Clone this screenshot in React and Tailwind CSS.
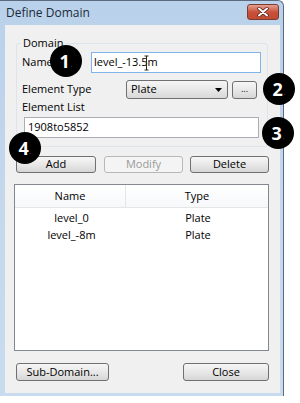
import React from "react";

function Badge({ n, className }) {
  return (
    <div
      className={
        "absolute w-[32px] h-[32px] rounded-full bg-black flex items-center justify-center " +
        className
      }
    >
      <span className="text-white font-bold text-[18px] leading-none font-['Open_Sans',sans-serif]">
        {n}
      </span>
      <span className="text-[#9a9a9a] text-[6px] leading-none mt-[8px] ml-[1px]">.</span>
    </div>
  );
}

function Btn({ children, className = "", disabled = false }) {
  return (
    <div
      className={
        "flex items-center justify-center rounded-[3px] border " +
        (disabled
          ? "border-[#b5b9bc] bg-[#f4f4f4] text-[#9a9a9a] "
          : "border-[#707070] bg-gradient-to-b from-[#f6f6f6] via-[#e8e8e8] to-[#d6d6d6] text-black ") +
        className
      }
    >
      {children}
    </div>
  );
}

export default function App() {
  return (
    <div className="relative w-[300px] h-[403px] bg-white overflow-hidden font-['Open_Sans',sans-serif] text-[11px] text-black">
      <div className="flex flex-col w-[284px] h-[396px] bg-gradient-to-b from-[#b9d1ea] via-[#c4d7ed] to-[#c9dbef] border-t border-r border-[#5b6b7d] rounded-tr-[6px]">
        {/* title bar */}
        <div className="flex items-center h-[24px] pl-[6px] pr-[4px]">
          <span className="text-[12px] text-[#1c2a3a] leading-none">Define Domain</span>
          <div className="ml-auto mt-[-3px] w-[32px] h-[16px] rounded-[3px] border border-[#7a3b30] bg-gradient-to-b from-[#e4a08f] via-[#c9513b] to-[#c24a33] flex items-center justify-center">
            <svg width="12" height="10" viewBox="0 0 12 10">
              <path d="M2 1.5 L10 8.5 M10 1.5 L2 8.5" stroke="#4a1a12" strokeWidth="3.4" strokeLinecap="round" />
              <path d="M2 1.5 L10 8.5 M10 1.5 L2 8.5" stroke="#ffffff" strokeWidth="2" strokeLinecap="round" />
            </svg>
          </div>
        </div>

        {/* client area */}
        <div className="ml-[5px] mr-[3px] mb-[3px] flex-1 bg-[#f0f0f0] flex flex-col">
          {/* group box */}
          <div className="relative ml-[11px] mt-[18px] w-[252px] h-[104px] border border-[#dde4ea] rounded-[3px] flex flex-col">
            <span className="absolute left-[4px] top-[-9px] px-[2px] bg-[#f0f0f0] leading-[16px]">Domain</span>
            <div className="flex items-center mt-[8px] pl-[5px]">
              <span className="w-[69px]">Name</span>
              <div className="relative w-[170px] h-[21px] bg-white border border-[#7eb4ea] flex items-center pl-[2px]">
                <span>level_-13.5m</span>
                <svg className="absolute left-[52px] top-[2px]" width="5" height="16" viewBox="0 0 5 16">
                  <path d="M0.5 1 H4.5 M2.5 1 V15 M0.5 15 H4.5" stroke="#2a2a10" strokeWidth="1" fill="none" />
                </svg>
              </div>
            </div>
            <div className="flex items-center mt-[7px] pl-[5px]">
              <span className="w-[104px]">Element Type</span>
              <div className="w-[102px] h-[19px] rounded-[3px] border border-[#707070] bg-gradient-to-b from-[#f6f6f6] via-[#e8e8e8] to-[#d8d8d8] flex items-center pl-[4px] pr-[5px]">
                <span>Plate</span>
                <svg className="ml-auto" width="7" height="4" viewBox="0 0 7 4">
                  <path d="M0 0 H7 L3.5 4 Z" fill="#000" />
                </svg>
              </div>
              <Btn className="ml-[4px] w-[25px] h-[18px]">
                <span className="text-[9px] leading-none mt-[-3px]">...</span>
              </Btn>
            </div>
            <span className="mt-[1px] pl-[5px] leading-[14px]">Element List</span>
            <div className="ml-[7px] mt-[3px] w-[235px] h-[21px] bg-white border border-[#abadb3] flex items-center pl-[3px]">
              <span>1908to5852</span>
            </div>
          </div>

          {/* action buttons */}
          <div className="flex ml-[11px] mt-[9px]">
            <Btn className="w-[80px] h-[17px]">Add</Btn>
            <Btn className="ml-[8px] w-[79px] h-[17px]" disabled>
              Modify
            </Btn>
            <Btn className="ml-[7px] w-[79px] h-[17px]">Delete</Btn>
          </div>

          {/* list view */}
          <div className="ml-[9px] mt-[11px] w-[255px] h-[167px] bg-white border border-[#828790] flex flex-col">
            <div className="flex h-[23px] border-b border-[#e5e5e5] bg-gradient-to-b from-white to-[#f7f8fa]">
              <div className="w-[111px] border-r border-[#e5e5e5] flex items-center justify-center">Name</div>
              <div className="flex-1 flex items-center justify-center">Type</div>
            </div>
            <div className="pt-[2px] flex flex-col">
              <div className="flex h-[17px] items-center">
                <span className="w-[113px] text-center">level_0</span>
                <span className="flex-1 text-center">Plate</span>
              </div>
              <div className="flex h-[17px] items-center">
                <span className="w-[113px] text-center">level_-8m</span>
                <span className="flex-1 text-center">Plate</span>
              </div>
            </div>
          </div>

          {/* bottom buttons */}
          <div className="flex ml-[11px] mt-[12px]">
            <Btn className="w-[93px] h-[18px]">Sub-Domain...</Btn>
            <Btn className="ml-[74px] w-[86px] h-[18px]">Close</Btn>
          </div>
        </div>
      </div>

      <Badge n="1" className="left-[50px] top-[45px]" />
      <Badge n="2" className="left-[263px] top-[73px]" />
      <Badge n="3" className="left-[262px] top-[117px]" />
      <Badge n="4" className="left-[9px] top-[132px]" />
    </div>
  );
}
